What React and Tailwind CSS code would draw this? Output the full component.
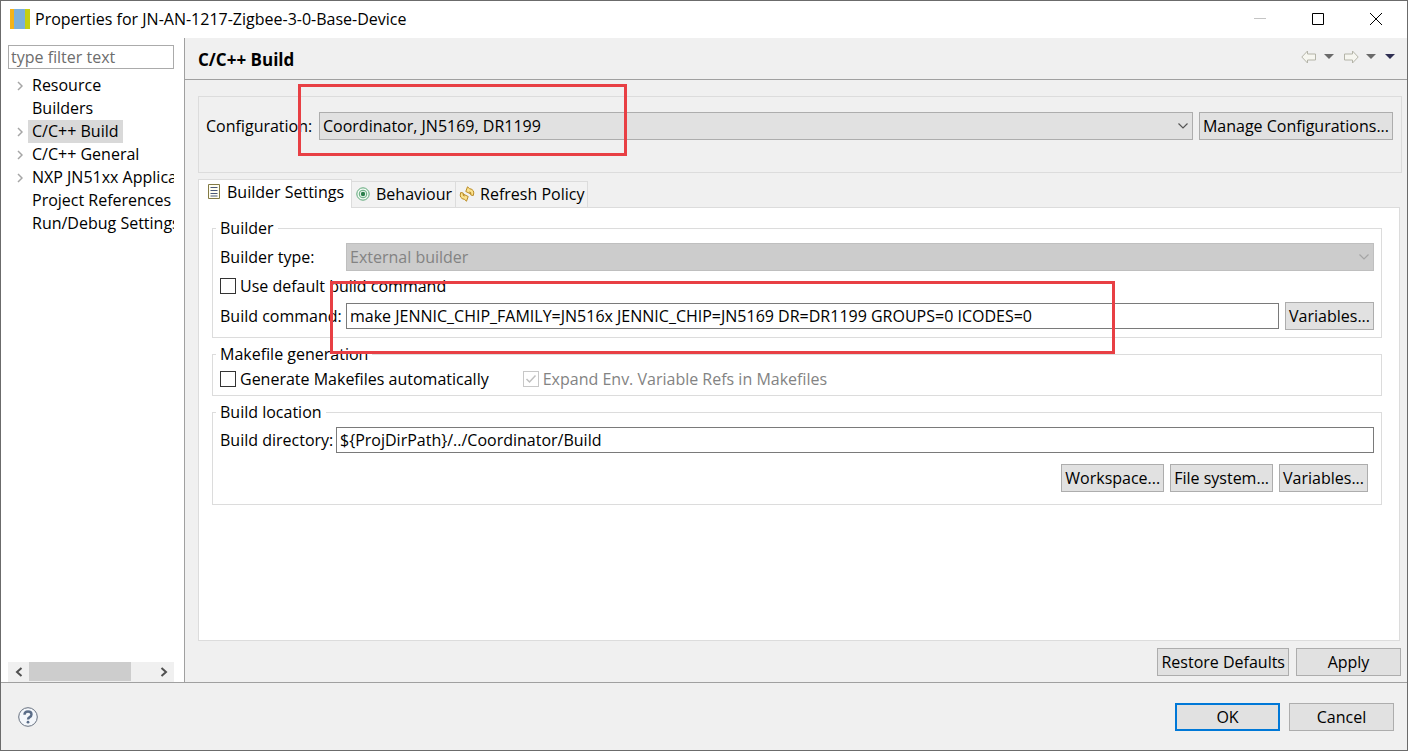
import { useState } from "react";

const treeItems = [
  { name: "Resource", expandable: true },
  { name: "Builders" },
  { name: "C/C++ Build", expandable: true },
  { name: "C/C++ General", expandable: true },
  { name: "NXP JN51xx Application", expandable: true },
  { name: "Project References" },
  { name: "Run/Debug Settings" },
];

const Chevron = ({ className }) => (
  <svg viewBox="0 0 12 8" className={className} fill="none" stroke="currentColor" strokeWidth="1.2">
    <path d="M1.500 1.500 6 6 10.500 1.500" />
  </svg>
);

const AppIcon = () => (
  <svg viewBox="0 0 20 20" className="size-5 shrink-0">
    <rect width="5" height="20" fill="#f2b31b" />
    <rect x="4" width="11" height="20" fill="#7bb0db" />
    <rect x="15" width="5" height="20" fill="#c5cf12" />
  </svg>
);

const SettingsIcon = () => (
  <svg viewBox="0 0 16 16" className="size-4 shrink-0" fill="none">
    <path d="M2.5 .5h11v14h-11z" fill="#fffef2" stroke="#837a45" />
    <path d="M4.5 3.5h7M4.5 6.5h7M4.5 9.5h7M4.5 12h7" stroke="#4a5878" />
  </svg>
);

const BehaviourIcon = () => (
  <svg viewBox="0 0 16 16" className="size-4 shrink-0" fill="none">
    <circle cx="8" cy="8" r="6.2" fill="#f1faf3" stroke="#5fa87a" />
    <circle cx="8" cy="8" r="3.8" stroke="#5fa87a" />
    <circle cx="8" cy="8" r="2.2" fill="#2c7f4c" />
  </svg>
);

const RefreshIcon = () => (
  <svg viewBox="0 0 16 16" className="size-4 shrink-0" fill="#fbe28e" stroke="#b98a25" strokeLinejoin="round">
    <path d="M8.500 .8 6.800 5.500 11.500 7.800 10.800 5.800Q12.300 6 11.800 9L14.300 9.500Q16.200 3.600 10.500 2.600Z" />
    <path d="M7.500 15.200 9.200 10.500 4.500 8.200 5.200 10.200Q3.700 10 4.200 7L1.700 6.500Q-.2 12.400 5.500 13.400Z" />
  </svg>
);

const NavArrow = ({ className }) => (
  <svg viewBox="0 0 16 14" className={className} fill="#f6f6f0" stroke="#b4b4a8" strokeLinejoin="round">
    <path d="M.8 7 6.500 1v3h8v6h-8v3z" />
  </svg>
);

const Caret = ({ className }) => (
  <svg viewBox="0 0 10 5" className={className} fill="currentColor">
    <path d="M0 0h10L5 5z" />
  </svg>
);

const Button = ({ children, className = "" }) => (
  <button
    type="button"
    className={`h-7 shrink-0 border border-[#adadad] bg-[#e1e1e1] px-[3px] whitespace-nowrap hover:bg-[#e5f1fb] ${className}`}
  >
    {children}
  </button>
);

const Group = ({ title, className = "", children }) => (
  <fieldset className={`min-w-0 border border-[#dcdcdc] px-[7px] ${className}`}>
    <legend className="-ml-1 px-1 leading-5">{title}</legend>
    {children}
  </fieldset>
);

const Checkbox = ({ label, disabled, ...props }) => (
  <label className={`flex items-center gap-1 ${disabled ? "text-[#838383]" : ""}`}>
    <span className="grid size-4">
      <input
        type="checkbox"
        disabled={disabled}
        className="peer col-start-1 row-start-1 size-4 appearance-none border border-[#333] bg-white disabled:border-[#c8c8c8]"
        {...props}
      />
      <svg
        viewBox="0 0 16 16"
        className="pointer-events-none invisible col-start-1 row-start-1 size-4 peer-checked:visible"
        fill="none"
        stroke={disabled ? "#c0c0c0" : "#333"}
        strokeWidth="1.500"
      >
        <path d="M3.500 8 6.500 11 12.500 4.500" />
      </svg>
    </span>
    {label}
  </label>
);

const Tab = ({ icon, label, active }) => (
  <button
    type="button"
    role="tab"
    aria-selected={active}
    className={
      active
        ? "-mb-px flex h-[29px] items-center gap-[5px] border border-b-0 border-[#dcdcdc] bg-white px-[7px] pb-1"
        : "flex h-[26px] items-center gap-[5px] border border-b-0 border-l-0 border-[#dcdcdc] bg-[#f2f2f2] px-[3px] pb-0.5"
    }
  >
    {icon}
    {label}
  </button>
);

const TitleBar = () => (
  <header className="flex h-[37px] items-center bg-white pb-0.5 pl-[9px]">
    <AppIcon />
    <h1 className="ml-[5px] flex-1">Properties for JN-AN-1217-Zigbee-3-0-Base-Device</h1>
    <div className="flex pr-[2px]">
      <button type="button" disabled aria-label="Minimize" className="flex w-[58px] justify-center text-[#c4c4c4]">
        <svg viewBox="0 0 12 12" className="size-3" stroke="currentColor">
          <path d="M0 5.500h12" />
        </svg>
      </button>
      <button type="button" aria-label="Maximize" className="flex w-[58px] justify-center">
        <svg viewBox="0 0 12 12" className="size-3" fill="none" stroke="currentColor">
          <path d="M.5 .5h11v11H.5z" />
        </svg>
      </button>
      <button type="button" aria-label="Close" className="flex w-[58px] justify-center">
        <svg viewBox="0 0 12 12" className="size-3" stroke="currentColor">
          <path d="M0 0 12 12M12 0 0 12" />
        </svg>
      </button>
    </div>
  </header>
);

const Sidebar = () => {
  const [selected, setSelected] = useState("C/C++ Build");

  return (
    <aside className="flex w-[184px] shrink-0 flex-col border-r border-[#a0a0a0] bg-white pt-[7px] pr-[10px] pl-[7px]">
      <input
        type="text"
        aria-label="Filter"
        placeholder="type filter text"
        className="h-6 w-full border border-[#ababab] px-0.5 placeholder:text-[#6d6d6d]"
      />
      <ul className="mt-[5px] flex-1 overflow-hidden">
        {treeItems.map((item) => (
          <li key={item.name} className="flex h-[23px] items-center">
            <span className="flex w-5 shrink-0 justify-center pl-1 text-[#a6a6a6]">
              {item.expandable && (
                <svg viewBox="0 0 6 10" className="h-2.5 w-1.5" fill="none" stroke="currentColor" strokeWidth="1.500">
                  <path d="M1 1 5 5 1 9" />
                </svg>
              )}
            </span>
            <button
              type="button"
              onClick={() => setSelected(item.name)}
              className={`h-[23px] shrink-0 px-1 pb-px whitespace-nowrap ${selected === item.name ? "bg-[#d9d9d9]" : ""}`}
            >
              {item.name}
            </button>
          </li>
        ))}
      </ul>
      <div className="flex h-5 bg-[#f0f0f0] text-[#505050]">
        <button type="button" aria-label="Scroll left" className="flex w-[21px] items-center justify-center">
          <svg viewBox="0 0 8 10" className="h-2.5 w-2" fill="none" stroke="currentColor" strokeWidth="2">
            <path d="M6.500 1 2 5 6.500 9" />
          </svg>
        </button>
        <div className="flex-1">
          <div className="h-[19px] w-[102px] bg-[#cdcdcd]" />
        </div>
        <button type="button" aria-label="Scroll right" className="flex w-[21px] items-center justify-center">
          <svg viewBox="0 0 8 10" className="h-2.5 w-2" fill="none" stroke="currentColor" strokeWidth="2">
            <path d="M1.500 1 6 5 1.500 9" />
          </svg>
        </button>
      </div>
    </aside>
  );
};

const PageHeader = () => (
  <div className="flex h-[42px] items-center justify-between border-b border-[#a0a0a0] pr-3 pl-[13px]">
    <h2 className="pt-0.5 text-[17px] font-bold">C/C++ Build</h2>
    <div className="flex items-center gap-[9px] pb-1 text-[#6a6a6a]">
      <div className="flex items-center gap-[7px]">
        <button type="button" aria-label="Back">
          <NavArrow className="h-3.5 w-4" />
        </button>
        <button type="button" aria-label="Back history">
          <Caret className="h-[5px] w-[10px]" />
        </button>
      </div>
      <div className="flex items-center gap-[7px]">
        <button type="button" aria-label="Forward">
          <NavArrow className="h-3.5 w-4 -scale-x-100" />
        </button>
        <button type="button" aria-label="Forward history">
          <Caret className="h-[5px] w-[10px]" />
        </button>
      </div>
      <button type="button" aria-label="Menu" className="text-[#2e2e52]">
        <Caret className="h-[5px] w-[10px]" />
      </button>
    </div>
  </div>
);

const Configuration = () => (
  <div className="relative flex h-[77px] items-center border border-[#dcdcdc] pr-2 pb-[17px] pl-[7px]">
    <label htmlFor="configuration" className="w-[113px] shrink-0">
      Configuration:
    </label>
    <div className="relative flex-1">
      <select
        id="configuration"
        className="block h-7 w-full appearance-none border border-[#adadad] bg-[#e1e1e1] px-[3px] pb-px"
      >
        <option>Coordinator, JN5169, DR1199</option>
      </select>
      <Chevron className="pointer-events-none absolute top-[10px] right-1 h-2 w-3 text-[#555]" />
    </div>
    <Button className="ml-1.5">Manage Configurations...</Button>
    <div className="pointer-events-none absolute -top-[13px] left-[99px] h-[72px] w-[329px] border-3 border-[#e83f44]" />
  </div>
);

const BuilderSettings = () => (
  <div className="mr-0.5 flex flex-1 flex-col gap-1.5 border border-[#dcdcdc] bg-white pt-[10px] pr-[17px] pb-4 pl-[13px]">
    <Group title="Builder" className="relative pt-[5px] pb-[7px]">
      <div className="flex items-center">
        <label htmlFor="builder-type" className="w-[126px] shrink-0">
          Builder type:
        </label>
        <div className="relative flex-1">
          <select
            id="builder-type"
            disabled
            className="block h-7 w-full appearance-none border border-[#bfbfbf] bg-[#cccccc] px-[3px] text-[#838383] opacity-100"
          >
            <option>External builder</option>
          </select>
          <Chevron className="pointer-events-none absolute top-[10px] right-1 h-2 w-3 text-[#a5a5a5]" />
        </div>
      </div>
      <div className="flex h-[31px] items-center pb-px">
        <Checkbox label="Use default build command" />
      </div>
      <div className="flex items-center">
        <label htmlFor="build-command" className="w-[126px] shrink-0">
          Build command:
        </label>
        <input
          id="build-command"
          type="text"
          defaultValue="make JENNIC_CHIP_FAMILY=JN516x JENNIC_CHIP=JN5169 DR=DR1199 GROUPS=0 ICODES=0"
          className="h-[26px] min-w-0 flex-1 border border-[#7a7a7a] bg-white px-[3px]"
        />
        <Button className="ml-1.5">Variables...</Button>
      </div>
      <div className="pointer-events-none absolute top-[43px] left-[117px] h-[73px] w-[785px] border-3 border-[#e83f44]" />
    </Group>

    <Group title="Makefile generation" className="pb-px">
      <div className="flex h-[30px] items-center gap-[34px]">
        <Checkbox label="Generate Makefiles automatically" />
        <Checkbox label="Expand Env. Variable Refs in Makefiles" defaultChecked disabled />
      </div>
    </Group>

    <Group title="Build location" className="pt-[5px] pb-3">
      <div className="flex items-center">
        <label htmlFor="build-directory" className="w-[116px] shrink-0">
          Build directory:
        </label>
        <input
          id="build-directory"
          type="text"
          defaultValue="${ProjDirPath}/../Coordinator/Build"
          className="h-[26px] min-w-0 flex-1 border border-[#7a7a7a] bg-white px-[3px]"
        />
      </div>
      <div className="mt-[11px] mr-1.5 flex justify-end gap-1.5">
        <Button>Workspace...</Button>
        <Button>File system...</Button>
        <Button>Variables...</Button>
      </div>
    </Group>
  </div>
);

export default function App() {
  return (
    <div className="flex min-h-screen flex-col border border-[#6b6b6b] bg-[#f0f0f0] font-['Open_Sans',sans-serif] text-[16px] leading-5 text-black">
      <TitleBar />
      <div className="flex flex-1">
        <Sidebar />
        <main className="flex min-w-0 flex-1 flex-col">
          <PageHeader />
          <div className="flex flex-1 flex-col pt-4 pr-[5px] pb-1.5 pl-[13px]">
            <Configuration />
            <div role="tablist" className="relative z-10 mt-1.5 flex items-end">
              <Tab icon={<SettingsIcon />} label="Builder Settings" active />
              <Tab icon={<BehaviourIcon />} label="Behaviour" />
              <Tab icon={<RefreshIcon />} label="Refresh Policy" />
            </div>
            <BuilderSettings />
            <div className="mt-[7px] mr-px flex justify-end gap-[7px]">
              <Button>Restore Defaults</Button>
              <Button className="w-[105px]">Apply</Button>
            </div>
          </div>
        </main>
      </div>
      <footer className="flex h-[68px] items-center justify-between border-t border-[#a0a0a0] pr-[13px] pl-[17px]">
        <button type="button" aria-label="Help">
          <svg viewBox="0 0 20 20" className="size-5" fill="none">
            <circle cx="10" cy="10" r="9.300" fill="#f4f7fb" stroke="#66707f" />
            <path d="M6.500 7.800q0-3.300 3.500-3.300t3.500 3q0 1.600-1.800 2.600-1.700 1-1.700 2.400" stroke="#5b6d88" strokeWidth="2.400" />
            <circle cx="10" cy="15.200" r="1.400" fill="#5b6d88" />
          </svg>
        </button>
        <div className="flex gap-[9px]">
          <button type="button" className="h-7 w-[105px] border-2 border-[#0078d7] bg-[#e1e1e1]">
            OK
          </button>
          <Button className="w-[105px]">Cancel</Button>
        </div>
      </footer>
    </div>
  );
}
